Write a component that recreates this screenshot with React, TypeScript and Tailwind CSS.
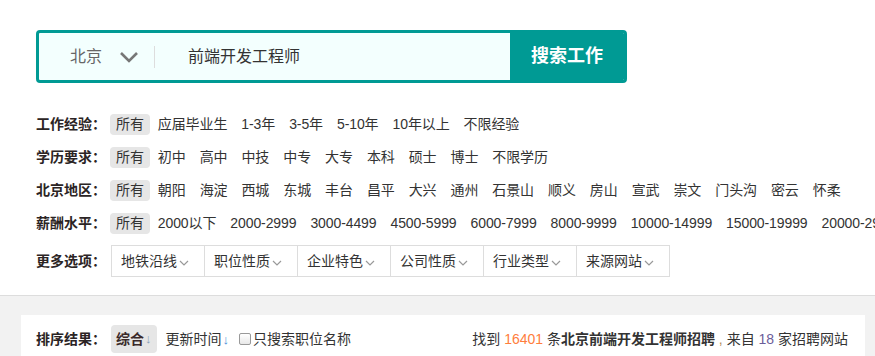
import React from 'react';

const font = "font-['Liberation_Sans','Noto_Sans_CJK_SC',sans-serif]";

const filters: { label: string; items: string[] }[] = [
  { label: '工作经验：', items: ['所有', '应届毕业生', '1-3年', '3-5年', '5-10年', '10年以上', '不限经验'] },
  { label: '学历要求：', items: ['所有', '初中', '高中', '中技', '中专', '大专', '本科', '硕士', '博士', '不限学历'] },
  {
    label: '北京地区：',
    items: ['所有', '朝阳', '海淀', '西城', '东城', '丰台', '昌平', '大兴', '通州', '石景山', '顺义', '房山', '宣武', '崇文', '门头沟', '密云', '怀柔'],
  },
  {
    label: '薪酬水平：',
    items: ['所有', '2000以下', '2000-2999', '3000-4499', '4500-5999', '6000-7999', '8000-9999', '10000-14999', '15000-19999', '20000-29999'],
  },
];

const moreOptions = ['地铁沿线', '职位性质', '企业特色', '公司性质', '行业类型', '来源网站'];

const SmallChevron = () => (
  <svg width="10" height="6" viewBox="0 0 10 6" className="ml-[2px] mt-[3px]">
    <path d="M1 1l4 4 4-4" fill="none" stroke="#999" strokeWidth="1.2" />
  </svg>
);

export default function App() {
  return (
    <div className={`w-[875px] h-[356px] overflow-hidden bg-white text-[#333] ${font}`}>
      {/* Top: search + filters */}
      <div className="pl-[36px] pt-[30px] pb-[18px]">
        <div className="flex w-[591px] h-[53px] border-[3px] border-[#009a94] rounded-[4px] bg-[#f3fffe] overflow-hidden">
          <div className="flex items-center pl-[31px] flex-1">
            <span className="text-[16px] text-[#666]">北京</span>
            <svg width="20" height="12" viewBox="0 0 20 12" className="ml-[17px]">
              <path d="M2 2l8 8 8-8" fill="none" stroke="#777" strokeWidth="2.6" />
            </svg>
            <div className="ml-[15px] w-[1px] h-[22px] bg-[#ddd]" />
            <span className="ml-[33px] text-[16px] text-[#333]">前端开发工程师</span>
          </div>
          <button className="w-[114px] h-full bg-[#009a94] text-white text-[18px] font-bold">搜索工作</button>
        </div>

        <div className="mt-[25px]">
          {filters.map(row => (
            <div key={row.label} className="flex items-center h-[33px] whitespace-nowrap">
              <span className="w-[74px] shrink-0 text-[14px] font-bold text-[#2b2424]">{row.label}</span>
              <div className="flex items-center gap-[2px] tracking-[-0.1px]">
                {row.items.map((it, i) => (
                  <span
                    key={it}
                    className={`px-[6px] h-[21px] leading-[21px] text-[14px] rounded-[4px] ${
                      i === 0 ? 'bg-[#e6e6e6]' : ''
                    }`}
                  >
                    {it}
                  </span>
                ))}
              </div>
            </div>
          ))}
        </div>

        <div className="flex items-center mt-[5px]">
          <span className="w-[75px] shrink-0 text-[14px] font-bold text-[#2b2424]">更多选项：</span>
          <div className="flex border-l border-[#ddd]">
            {moreOptions.map(o => (
              <div key={o} className="flex items-center w-[93px] h-[32px] border-y border-r border-[#ddd] pl-[9px] text-[14px] text-[#333]">
                {o}
                <SmallChevron />
              </div>
            ))}
          </div>
        </div>
      </div>

      {/* Bottom: results bar */}
      <div className="border-t border-[#ddd] bg-[#f2f2f2] pt-[19px] h-[200px]">
        <div className="ml-[21px] w-[844px] bg-white pt-[10px] pl-[15px] pr-[17px] h-[60px]">
          <div className="flex items-center h-[28px] whitespace-nowrap">
            <span className="w-[75px] shrink-0 text-[14px] font-bold text-[#2b2424]">排序结果：</span>
            <span className="flex items-center h-[28px] px-[5px] rounded-[4px] bg-[#e6e6e6] text-[14px] font-bold text-[#3a2a2a]">
              综合<span className="ml-[1px] text-[13px] font-normal text-[#8aa0b8]">↓</span>
            </span>
            <span className="ml-[9px] text-[14px] text-[#333]">
              更新时间<span className="ml-[1px] text-[13px] text-[#4a90d9]">↓</span>
            </span>
            <span className="ml-[10px] flex items-center text-[14px] text-[#333]">
              <span className="w-[12px] h-[12px] mr-[2px] rounded-[2px] border border-[#999] bg-gradient-to-b from-white to-[#e8e8e8]" />
              只搜索职位名称
            </span>
            <span className="ml-auto text-[14px] text-[#333]">
              找到 <span className="text-[#ff7d3c]">16401</span> 条<span className="font-bold">北京前端开发工程师招聘</span>
              <span className="text-[#b08a5a]"> , </span>来自 <span className="text-[#6b5d99]">18</span> 家招聘网站
            </span>
          </div>
        </div>
      </div>
    </div>
  );
}
